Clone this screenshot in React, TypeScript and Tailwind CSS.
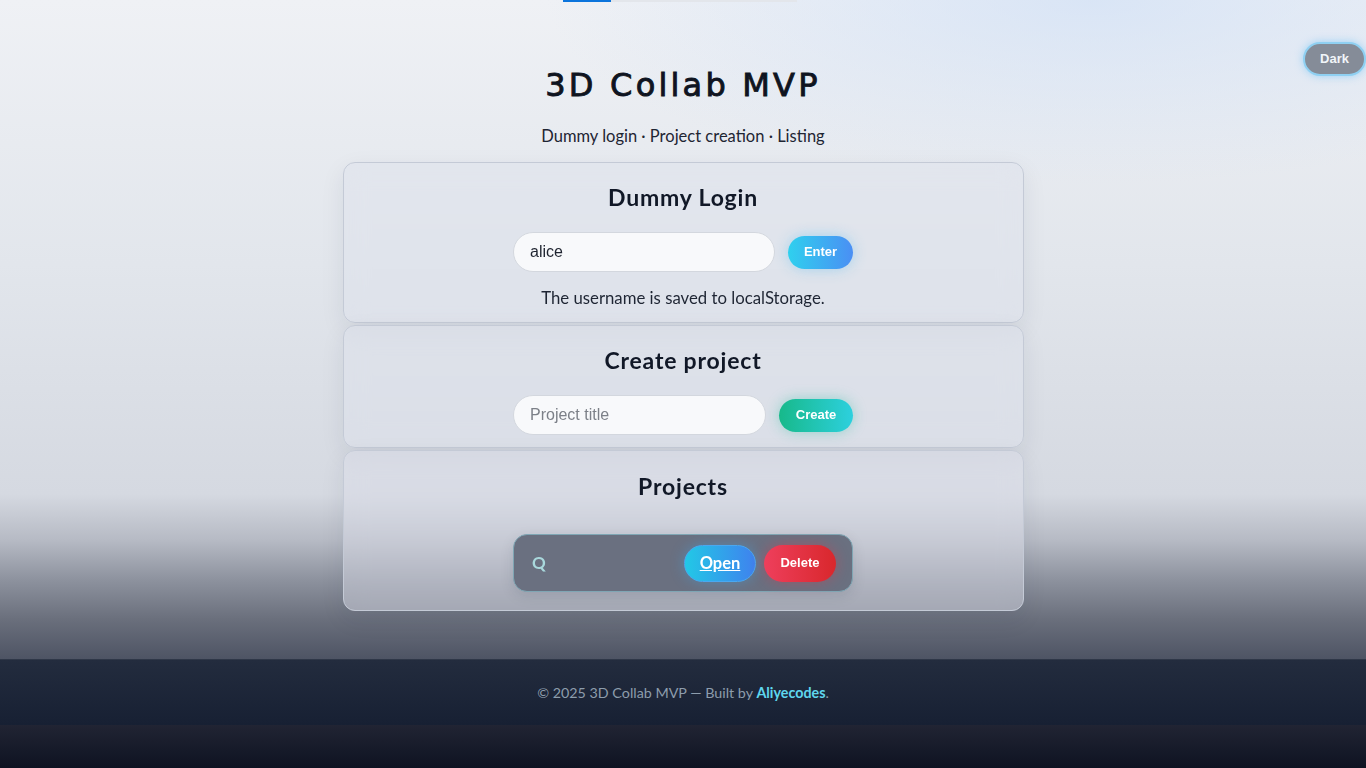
import React from "react";

export default function App() {
  return (
    <div className="relative min-h-[768px] w-full flex flex-col bg-[#0f1424] font-['Lato','Noto_Sans',sans-serif]">
      {/* top progress strip */}
      <div className="absolute left-[563px] top-0 flex h-[2px] w-[234px] bg-[#e3e6eb]">
        <div className="h-full w-[48px] bg-[#0b74dc]" />
      </div>

      {/* theme toggle */}
      <button className="absolute right-0 top-[42px] h-[34px] w-[63px] rounded-full border-2 border-[#8fd0f2] bg-[#858c98] font-['Liberation_Sans',Arial,sans-serif] text-[13px] font-bold text-[#f1f5f9] shadow-[0_0_8px_rgba(125,200,245,0.7)]">
        Dark
      </button>

      <main className="flex h-[659px] flex-col items-center bg-[radial-gradient(ellipse_40%_28%_at_80%_0%,rgba(208,224,246,0.7),rgba(208,224,246,0)),linear-gradient(180deg,#eff1f5_0%,#e2e6ec_40%,#d5d9e1_75%,#b6bac4_82%,#8d929e_88%,#6a6f7c_94%,#4e5464_100%)]">
        <h1 className="mt-[65px] h-[40px] font-['DejaVu_Sans',sans-serif] text-[32px] leading-[40px] tracking-[3.2px] text-[#0f1420] [-webkit-text-stroke:0.9px_#0f1420]">
          3D Collab MVP
        </h1>
        <p className="mt-[19px] h-[24px] text-[16.5px] leading-[24px] text-[#1e2533]">
          Dummy login · Project creation · Listing
        </p>

        <div className="mt-[14px] flex w-[681px] flex-col gap-[2px]">
          {/* Dummy login */}
          <section className="flex flex-col items-center rounded-xl border border-[#c4cad6] bg-[rgba(221,225,235,0.5)] pt-[13px] pb-[13px] shadow-[0_8px_24px_rgba(30,40,60,0.08)] backdrop-blur-md">
            <h2 className="h-[42px] text-[23px] font-bold leading-[42px] tracking-[0.8px] text-[#111827]">Dummy Login</h2>
            <div className="mt-[14px] flex w-[340px] items-center gap-[13px]">
              <input
                defaultValue="alice"
                className="h-[40px] min-w-0 flex-1 rounded-full border border-[#d3d7de] bg-[#f8f9fb] px-[16px] font-['Liberation_Sans',Arial,sans-serif] text-[16px] text-[#1f2430] outline-none"
              />
              <button className="h-[33px] w-[65px] rounded-full bg-[linear-gradient(90deg,#2fd0ee,#4a8ff4)] font-['Liberation_Sans',Arial,sans-serif] text-[13px] font-bold text-white shadow-[0_0_14px_rgba(90,190,240,0.45)]">
                Enter
              </button>
            </div>
            <p className="mt-[15px] h-[22px] text-[16.75px] leading-[22px] text-[#1e2533]">
              The username is saved to localStorage.
            </p>
          </section>

          {/* Create project */}
          <section className="flex flex-col items-center rounded-xl border border-[#c4cad6] bg-[rgba(221,225,235,0.5)] pt-[13px] pb-[12px] shadow-[0_8px_24px_rgba(30,40,60,0.08)] backdrop-blur-md">
            <h2 className="h-[42px] text-[23px] font-bold leading-[42px] tracking-[0.8px] text-[#111827]">Create project</h2>
            <div className="mt-[14px] flex w-[340px] items-center gap-[13px]">
              <input
                placeholder="Project title"
                className="h-[40px] min-w-0 flex-1 rounded-full border border-[#d3d7de] bg-[#f8f9fb] px-[16px] font-['Liberation_Sans',Arial,sans-serif] text-[16px] text-[#1f2430] placeholder:text-[#7c8088] outline-none"
              />
              <button className="h-[33px] w-[74px] rounded-full bg-[linear-gradient(90deg,#17b98a,#2dd0de)] font-['Liberation_Sans',Arial,sans-serif] text-[13px] font-bold text-white shadow-[0_0_14px_rgba(40,190,160,0.4)]">
                Create
              </button>
            </div>
          </section>

          {/* Projects */}
          <section className="flex flex-col items-center rounded-xl border border-[#c4cad6] bg-[rgba(221,225,235,0.45)] pt-[13px] pb-[18px] shadow-[0_8px_24px_rgba(30,40,60,0.08)] backdrop-blur-md">
            <h2 className="h-[44px] text-[23px] font-bold leading-[44px] tracking-[0.8px] text-[#111827]">Projects</h2>
            <ul className="mt-[26px] w-[340px]">
              <li className="flex h-[58px] items-center justify-between rounded-[14px] border border-[#7fa6b4] bg-[#6a7080] pl-[18px] pr-[16px] shadow-[0_4px_14px_rgba(20,30,50,0.12)]">
                <span className="text-[17px] font-bold text-[#a9d8dc]">Q</span>
                <div className="flex items-center gap-[8px]">
                  <a
                    href="#"
                    className="flex h-[37px] w-[72px] items-center justify-center rounded-full border border-[#4aa8f0] bg-[linear-gradient(90deg,#22c8e6,#3f82ee)] text-[16.5px] font-bold text-white underline shadow-[0_0_14px_rgba(60,170,240,0.4)]"
                  >
                    Open
                  </a>
                  <button className="h-[37px] w-[72px] rounded-full bg-[linear-gradient(90deg,#ee3f5c,#d9272c)] font-['Liberation_Sans',Arial,sans-serif] text-[13px] font-bold text-white shadow-[0_0_14px_rgba(230,50,70,0.4)]">
                    Delete
                  </button>
                </div>
              </li>
            </ul>
          </section>
        </div>
      </main>

      <footer className="flex h-[66px] items-center justify-center border-t border-[#2f3748] bg-[linear-gradient(180deg,#232c3e,#172033)] text-[14.3px] text-[#8d9dac]">
        <span>
          © 2025 3D Collab MVP — Built by <span className="font-bold text-[#5fd7ee]">Aliyecodes</span>.
        </span>
      </footer>

      <div className="flex-1 bg-[linear-gradient(180deg,#212433,#0e1322)]" />
    </div>
  );
}
